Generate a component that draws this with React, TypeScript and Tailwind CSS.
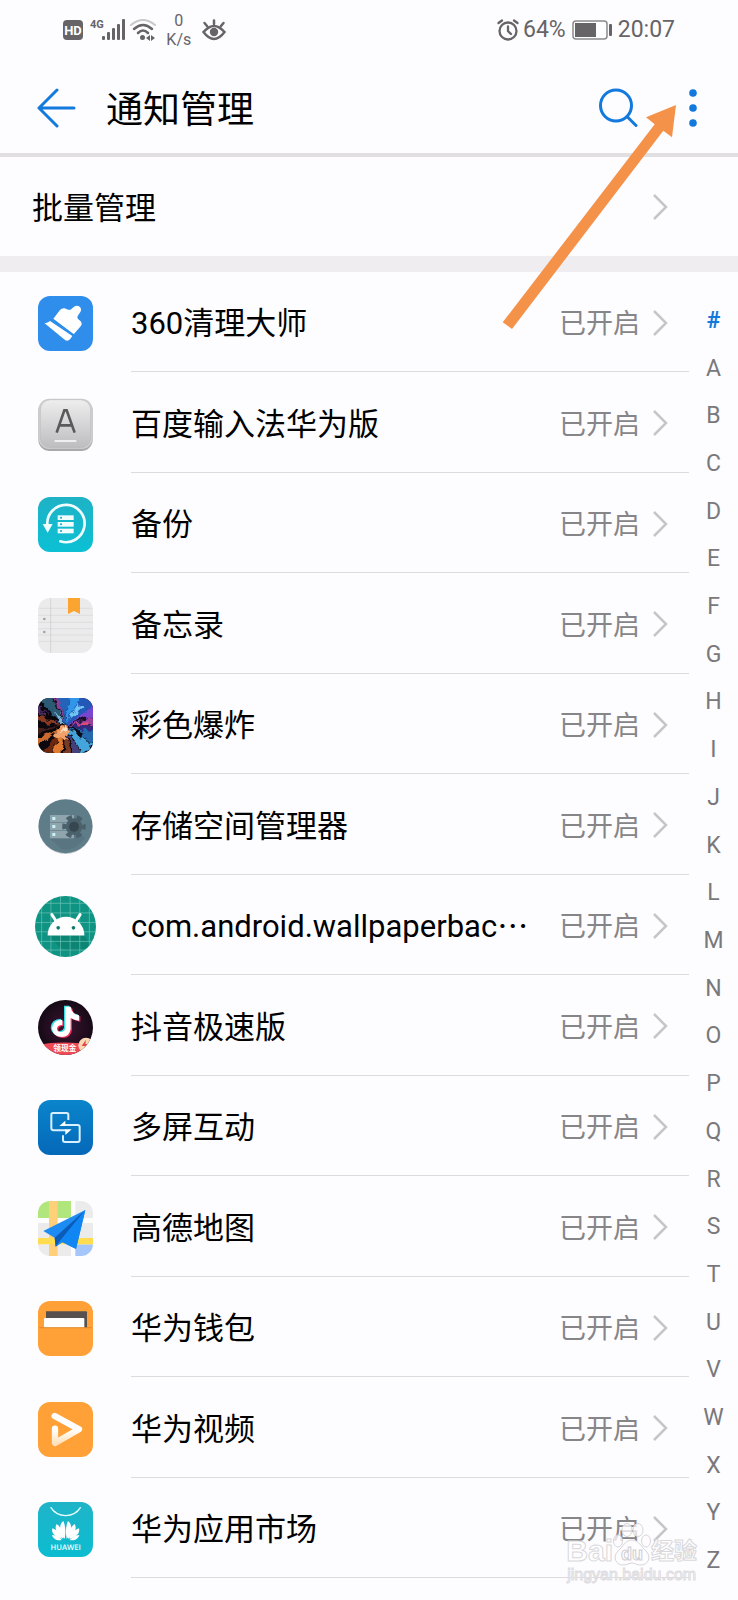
import type { ReactNode } from "react";

function CleanerIcon() {
  return (
    <svg viewBox="0 0 165 165" className="size-[55px]" aria-hidden="true">
      <rect width="165" height="165" rx="36" fill="#2f8eec" />
      <g fill="#fff">
        <path d="M20 82 Q30 81 36 75 L103 120 L96 130 Q90 137 82 133 Z" />
        <path d="M46 68 L66 42 Q72 35 80 37 L90 41 Q97 43 101 38 L110 31 Q118 27 126 33 Q132 40 127 48 L119 60 Q116 66 121 70 L128 76 Q134 83 128 91 L107 115 Z" />
      </g>
      <path d="M42 70 L107 117" stroke="#2f8eec" strokeWidth="4" />
    </svg>
  );
}

function InputMethodIcon() {
  return (
    <svg viewBox="0 0 165 165" className="size-[55px]" aria-hidden="true">
      <defs>
        <linearGradient id="key" x1="0" y1="0" x2="0" y2="1">
          <stop offset="0" stopColor="#eeeeef" />
          <stop offset="1" stopColor="#bdbdbf" />
        </linearGradient>
      </defs>
      <rect x="1" y="7" width="163" height="155" rx="34" fill="#a9a9ac" />
      <rect x="1" y="5" width="163" height="151" rx="34" fill="#cfcfd1" />
      <rect x="7" y="8" width="151" height="145" rx="30" fill="url(#key)" stroke="#bcbcbe" strokeWidth="2" />
      <path d="M56 107 L79 40 H86 L110 107 M64 85 H102" fill="none" stroke="#5a5a5d" strokeWidth="8" />
      <path d="M50 132 H115" stroke="#f8f8f9" strokeWidth="5" />
    </svg>
  );
}

function BackupIcon() {
  return (
    <svg viewBox="0 0 165 165" className="size-[55px]" aria-hidden="true">
      <defs>
        <linearGradient id="backup" x1="0" y1="0" x2="0" y2="1">
          <stop offset="0" stopColor="#1fb2c6" />
          <stop offset="1" stopColor="#0bc0d4" />
        </linearGradient>
      </defs>
      <rect width="165" height="165" rx="36" fill="url(#backup)" />
      <path d="M28 84 A56 56 0 1 1 67 133" fill="none" stroke="#f0fdff" strokeWidth="8" strokeLinecap="round" />
      <path d="M14 81 H44 L29 107 Z" fill="#f0fdff" />
      <g fill="#f0fdff">
        <rect x="59" y="55" width="48" height="14" />
        <rect x="59" y="75" width="48" height="14" />
        <rect x="59" y="95" width="48" height="14" />
      </g>
      <g fill="#14a3b8">
        <circle cx="69" cy="62" r="3" />
        <circle cx="69" cy="82" r="3" />
        <circle cx="69" cy="102" r="3" />
      </g>
    </svg>
  );
}

function NotesIcon() {
  return (
    <svg viewBox="0 0 165 165" className="size-[55px]" aria-hidden="true">
      <rect width="165" height="165" rx="36" fill="#ebebec" />
      <path d="M4 31 H162 M0 52 H165 M0 73 H165 M0 92 H165 M0 111 H165 M3 130 H162" stroke="#d8d8da" strokeWidth="2" />
      <path d="M38 1 V164" stroke="#c9c9cb" strokeWidth="2" />
      <circle cx="19" cy="63" r="4" fill="#a2a2a4" />
      <circle cx="19" cy="102" r="4" fill="#a2a2a4" />
      <path d="M90 0 H126 V48 L108 39 L90 48 Z" fill="#fba430" />
    </svg>
  );
}

function BurstIcon() {
  return (
    <svg viewBox="0 0 165 165" className="size-[55px]" aria-hidden="true">
      <defs>
        <clipPath id="burst-clip">
          <rect width="165" height="165" rx="34" />
        </clipPath>
        <filter id="ragged" x="-10%" y="-10%" width="120%" height="120%" colorInterpolationFilters="sRGB">
          <feTurbulence type="fractalNoise" baseFrequency="0.05" numOctaves="2" seed="7" result="noise" />
          <feDisplacementMap in="SourceGraphic" in2="noise" scale="26" xChannelSelector="R" yChannelSelector="G" />
          <feGaussianBlur stdDeviation="1.500" />
        </filter>
      </defs>
      <g clipPath="url(#burst-clip)">
        <rect width="165" height="165" fill="#0b0810" />
        <g filter="url(#ragged)">
          <path d="M80 84 L-10 -10 L40 -10 Z" fill="#2c5a74" />
          <path d="M80 80 L44 -10 L66 -10 Z" fill="#8a3f96" />
          <path d="M82 80 L62 -10 L96 -10 Z" fill="#2464b8" />
          <path d="M84 84 L92 -10 L176 -10 L172 30 Z" fill="#2358b8" />
          <path d="M84 74 L96 -6 L128 -6 Z" fill="#2f96e8" />
          <path d="M92 66 L118 18 L134 30 Z" fill="#6fc6f2" />
          <path d="M86 82 L172 18 L172 56 Z" fill="#7a46d0" />
          <path d="M88 84 L172 58 L172 82 Z" fill="#9a3f9c" />
          <path d="M104 82 L150 72 L152 80 Z" fill="#e04a78" />
          <path d="M88 86 L172 82 L172 102 Z" fill="#332a86" />
          <path d="M86 88 L172 100 L172 140 Z" fill="#2468ae" />
          <path d="M86 90 L166 138 L134 166 Z" fill="#44a4dc" />
          <path d="M84 92 L136 172 L108 172 Z" fill="#46407a" />
          <path d="M80 92 L102 172 L78 172 Z" fill="#7a3a26" />
          <path d="M78 92 L70 172 L40 172 Z" fill="#e07a30" />
          <path d="M76 90 L40 168 L10 164 Z" fill="#6e2810" />
          <path d="M76 88 L-6 146 L-6 120 Z" fill="#cc6a2e" />
          <path d="M74 84 L-6 106 L-6 88 Z" fill="#42201c" />
          <path d="M74 82 L-6 72 L-6 48 Z" fill="#8a3a20" />
          <path d="M74 80 L-6 40 L-6 16 Z" fill="#54306a" />
          <path d="M82 78 L96 96 L80 128 L46 116 L60 96 Z" fill="#f2a06a" />
          <path d="M78 82 L88 92 L66 108 Z" fill="#ffe0c4" />
          <path d="M50 36 L82 76 L68 80 Z" fill="#7cb8dc" />
          <path d="M98 88 L136 104 L126 122 Z" fill="#0c0a18" />
          <path d="M96 74 L150 52 L142 66 Z" fill="#140d24" />
          <path d="M66 66 L12 36 L30 68 Z" fill="#08060a" />
          <path d="M62 90 L8 110 L36 110 Z" fill="#08060a" />
        </g>
      </g>
    </svg>
  );
}

function StorageIcon() {
  return (
    <svg viewBox="0 0 165 165" className="size-[55px]" aria-hidden="true">
      <circle cx="82.5" cy="84" r="81" fill="#c2c8cb" />
      <circle cx="82.5" cy="81.500" r="81" fill="#5f7c89" />
      <path d="M36 118 L70 150 Q112 158 140 118 L108 84 Z" fill="#597581" />
      <g fill="#90a4ad">
        <rect x="36" y="48" width="72" height="22" />
        <rect x="36" y="72" width="72" height="22" />
        <rect x="36" y="96" width="72" height="22" />
      </g>
      <g fill="#c4f4f4">
        <rect x="43" y="54" width="9" height="9" />
        <rect x="43" y="78" width="9" height="9" />
        <rect x="43" y="102" width="9" height="9" />
      </g>
      <circle cx="108" cy="83" r="25" fill="#4a616c" />
      <circle cx="108" cy="83" r="29" fill="none" stroke="#4a616c" strokeWidth="13" strokeDasharray="16 14.370" strokeDashoffset="8" />
      <circle cx="108" cy="83" r="15" fill="#37474f" />
    </svg>
  );
}

function AndroidIcon() {
  return (
    <svg viewBox="0 0 184 184" className="size-[61px]" aria-hidden="true">
      <defs>
        <clipPath id="android-clip">
          <circle cx="92" cy="92" r="92" />
        </clipPath>
      </defs>
      <g clipPath="url(#android-clip)">
        <rect width="184" height="184" fill="#0f9483" />
        <path d="M38 118 L72 152 Q120 180 170 150 L148 118 Z" fill="#0c8575" />
        <path d="M20 0 V184 M48 0 V184 M77 0 V184 M106 0 V184 M135 0 V184 M164 0 V184 M0 22 H184 M0 51 H184 M0 80 H184 M0 108 H184 M0 137 H184 M0 163 H184" stroke="#6fc4b8" strokeWidth="2" />
      </g>
      <path d="M38 119 A55 56 0 0 1 149 119 Z" fill="#fff" />
      <path d="M51 56 L62 73 M136 56 L125 73" stroke="#fff" strokeWidth="9" strokeLinecap="round" />
      <circle cx="70" cy="96" r="5.500" fill="#0f7a6c" />
      <circle cx="116" cy="96" r="5.500" fill="#0f7a6c" />
    </svg>
  );
}

function NoteShape({ fill }: { fill: string }) {
  return (
    <path
      d="M82 20 H98 Q101 42 123 46 V62 Q109 61 98 54 V86 Q95 111 70 111 Q45 108 42 86 Q43 61 73 59 V75 Q57 76 57 86 Q58 96 70 96 Q81 95 82 84 Z"
      fill={fill}
    />
  );
}

function DouyinIcon() {
  return (
    <svg viewBox="0 0 165 165" className="size-[55px]" aria-hidden="true">
      <defs>
        <clipPath id="douyin-clip">
          <circle cx="82.5" cy="82.5" r="82.5" />
        </clipPath>
        <radialGradient id="douyin-bg">
          <stop offset="0" stopColor="#3c1432" />
          <stop offset="1" stopColor="#160a16" />
        </radialGradient>
      </defs>
      <g clipPath="url(#douyin-clip)">
        <rect width="165" height="165" fill="url(#douyin-bg)" />
        <g transform="translate(-4 -3)">
          <NoteShape fill="#35e0e6" />
        </g>
        <g transform="translate(4 3)">
          <NoteShape fill="#f0305c" />
        </g>
        <NoteShape fill="#fff" />
        <path d="M0 134 Q60 124 128 130 V165 H0 Z" fill="#ee4a58" />
        <circle cx="144" cy="136" r="23" fill="#fbd9b4" />
        <path d="M144 119 L131 138 H141 L137 152 L151 132 H142 Z" fill="#e8404a" />
        <text x="46" y="153" fontSize="23" fontWeight="700" fill="#fff" className="font-['Noto_Sans_CJK_SC',sans-serif]">
          领现金
        </text>
      </g>
    </svg>
  );
}

function ScreenShareIcon() {
  return (
    <svg viewBox="0 0 165 165" className="size-[55px]" aria-hidden="true">
      <defs>
        <linearGradient id="share" x1="0" y1="0" x2="0" y2="1">
          <stop offset="0" stopColor="#0a85cc" />
          <stop offset="1" stopColor="#0568b8" />
        </linearGradient>
      </defs>
      <rect width="165" height="165" rx="36" fill="url(#share)" />
      <g fill="none" stroke="#d8f0ff" strokeWidth="6" strokeLinejoin="round">
        <path d="M91 60 V44 Q91 39 86 39 H45 Q40 39 40 44 V84 Q40 91 47 91 H84" />
        <path d="M80 75 H119 Q125 75 125 81 V120 Q125 126 119 126 H81 Q75 126 75 120 V106" />
      </g>
      <path d="M64 78 L82 62 V78 Z M101 88 L82 105 V88 Z" fill="#fff" />
    </svg>
  );
}

function MapIcon() {
  return (
    <svg viewBox="0 0 165 165" className="size-[55px]" aria-hidden="true">
      <defs>
        <clipPath id="map-clip">
          <rect width="165" height="165" rx="36" />
        </clipPath>
      </defs>
      <g clipPath="url(#map-clip)">
        <rect width="165" height="165" fill="#fdfdfd" />
        <rect width="99" height="51" fill="#b0e67c" />
        <rect x="112" width="53" height="51" fill="#ebebec" />
        <rect y="66" width="165" height="46" fill="#ebebec" />
        <rect y="130" width="99" height="35" fill="#ebebec" />
        <rect x="112" y="130" width="53" height="35" fill="#a4c6fa" />
        <rect x="33" width="26" height="165" fill="#ffcf7a" />
        <rect y="111" width="165" height="19" fill="#ffdc50" />
      </g>
      <path d="M16 90 L142 27 L114 144 L74 124 L53 137 L50 110 Z" fill="#1c8cf4" />
      <path d="M50 110 L142 27 L66 120 L53 137 Z" fill="#0a5cb8" />
      <path d="M66 120 L142 27 L114 144 Z" fill="#0f86f4" />
    </svg>
  );
}

function WalletIcon() {
  return (
    <svg viewBox="0 0 165 165" className="size-[55px]" aria-hidden="true">
      <rect width="165" height="165" rx="36" fill="#ffa136" />
      <path d="M24 31 H144 Q147 31 147 34 V81 H24 Z" fill="#56504f" />
      <path d="M18 54 Q18 51 21 51 H136 Q139 51 139 54 V81 H18 Z" fill="#fff" />
      <path d="M4 80 H161" stroke="#e2892a" strokeWidth="3" />
    </svg>
  );
}

function VideoIcon() {
  return (
    <svg viewBox="0 0 165 165" className="size-[55px]" aria-hidden="true">
      <defs>
        <linearGradient id="play" x1="0" y1="0" x2="0" y2="1">
          <stop offset="0.5" stopColor="#fff" />
          <stop offset="1" stopColor="#ffe2bd" />
        </linearGradient>
      </defs>
      <rect width="165" height="165" rx="36" fill="#ffa136" />
      <path d="M50 42 L123 82 L51 123 V80" fill="none" stroke="url(#play)" strokeWidth="19" strokeLinejoin="round" strokeLinecap="round" />
    </svg>
  );
}

function MarketIcon() {
  return (
    <svg viewBox="0 0 165 165" className="size-[55px]" aria-hidden="true">
      <defs>
        <linearGradient id="market" x1="0" y1="0" x2="0" y2="1">
          <stop offset="0" stopColor="#1fb4c8" />
          <stop offset="1" stopColor="#0cbcd0" />
        </linearGradient>
      </defs>
      <rect width="165" height="165" rx="36" fill="url(#market)" />
      <path d="M39 17 Q53 40 83 41 Q113 40 127 17" fill="none" stroke="#e8fbff" strokeWidth="4" strokeLinecap="round" />
      <g fill="#fff">
        <path d="M80 110 C64 96 61 67 76 57 C84 74 83 96 80 110 Z" />
        <path d="M86 110 C102 96 105 67 90 57 C82 74 83 96 86 110 Z" />
        <path d="M76 110 C56 98 48 79 56 66 C70 76 76 94 76 110 Z" />
        <path d="M90 110 C110 98 118 79 110 66 C96 76 90 94 90 110 Z" />
        <path d="M72 111 C52 106 39 94 43 79 C58 84 68 98 72 111 Z" />
        <path d="M94 111 C114 106 127 94 123 79 C108 84 98 98 94 111 Z" />
        <path d="M71 114 C58 118 44 110 42 99 C54 100 64 106 71 114 Z" />
        <path d="M95 114 C108 118 122 110 124 99 C112 100 102 106 95 114 Z" />
      </g>
      <text x="83" y="143" textAnchor="middle" fontSize="23" fontWeight="600" fill="#f0fdff" textRendering="geometricPrecision" className="font-['Open_Sans',sans-serif]">
        HUAWEI
      </text>
    </svg>
  );
}

function Chevron() {
  return (
    <svg viewBox="0 0 16 28" className="h-[28px] w-[16px] shrink-0" aria-hidden="true">
      <path d="M2 2 L14 14 L2 26" fill="none" stroke="#c6c5c8" strokeWidth="2.500" />
    </svg>
  );
}

type AppEntry = { name: string; icon: ReactNode };

const apps: AppEntry[] = [
  { name: "360清理大师", icon: <CleanerIcon /> },
  { name: "百度输入法华为版", icon: <InputMethodIcon /> },
  { name: "备份", icon: <BackupIcon /> },
  { name: "备忘录", icon: <NotesIcon /> },
  { name: "彩色爆炸", icon: <BurstIcon /> },
  { name: "存储空间管理器", icon: <StorageIcon /> },
  { name: "com.android.wallpaperbac⋯", icon: <AndroidIcon /> },
  { name: "抖音极速版", icon: <DouyinIcon /> },
  { name: "多屏互动", icon: <ScreenShareIcon /> },
  { name: "高德地图", icon: <MapIcon /> },
  { name: "华为钱包", icon: <WalletIcon /> },
  { name: "华为视频", icon: <VideoIcon /> },
  { name: "华为应用市场", icon: <MarketIcon /> },
];

const letters = "ABCDEFGHIJKLMNOPQRSTUVWXYZ".split("");

function StatusBar() {
  return (
    <div className="flex h-[58px] items-center justify-between px-[63px] pt-[2px] text-[#666467]">
      <div className="flex items-center">
        <div className="flex size-[20px] items-center justify-center rounded-[4px] bg-[#666467] text-[13px] leading-none font-bold text-white">
          HD
        </div>
        <div className="ml-[7px] flex h-[22px] items-start">
          <span className="text-[11px] leading-[12px] font-bold">4G</span>
          <svg viewBox="0 0 24 22" className="-ml-[2px] h-[22px] w-[24px]" fill="currentColor" aria-hidden="true">
            <rect x="0" y="17" width="3" height="4" rx="1" />
            <rect x="5" y="13" width="3" height="8" rx="1" />
            <rect x="10" y="9" width="3" height="12" rx="1" />
            <rect x="15" y="5" width="3" height="16" rx="1" />
            <rect x="20" y="0" width="3" height="21" rx="1" />
          </svg>
        </div>
        <svg viewBox="0 0 26 22" className="ml-[4px] h-[22px] w-[26px]" aria-hidden="true">
          <g fill="none" stroke="currentColor" strokeWidth="2.500" strokeLinecap="round">
            <path d="M1 6 Q13 -4 25 6" stroke="#c9c8ca" strokeWidth="2" />
            <path d="M4 10 Q13 2 22 10" />
            <path d="M8 14 Q13 9 18 14" />
          </g>
          <circle cx="12.5" cy="18.500" r="2.500" fill="currentColor" />
          <path d="M16 19 L20 16 V22 Z M25 19 L21 16 V22 Z" fill="currentColor" />
        </svg>
        <div className="ml-[10px] flex w-[26px] flex-col items-center text-[16px] leading-[19px]">
          <span>0</span>
          <span>K/s</span>
        </div>
        <svg viewBox="0 0 24 22" className="ml-[10px] h-[22px] w-[24px]" fill="none" stroke="currentColor" strokeWidth="2.500" strokeLinecap="round" aria-hidden="true">
          <path d="M1.500 13 Q12 1 22.500 13 Q12 27 1.500 13 Z" />
          <circle cx="12" cy="13" r="4.200" fill="currentColor" stroke="none" />
          <path d="M12 5 V1.500 M5 7 L2.500 4 M19 7 L21.500 4" />
        </svg>
      </div>
      <div className="flex items-center text-[23px] leading-[28px]">
        <svg viewBox="0 0 22 22" className="mr-[4px] size-[22px]" fill="none" stroke="currentColor" strokeWidth="2.300" strokeLinecap="round" aria-hidden="true">
          <circle cx="11" cy="12" r="8.500" />
          <path d="M11 7.500 V12 L14 15 M1.500 4 L5 1.500 M20.500 4 L17 1.500" />
        </svg>
        <span>64%</span>
        <svg viewBox="0 0 40 20" className="mx-[6px] h-[20px] w-[40px]" aria-hidden="true">
          <rect x="1" y="1" width="34" height="18" rx="3" fill="none" stroke="#8b898c" strokeWidth="1.500" />
          <rect x="3" y="3" width="21" height="14" fill="currentColor" />
          <rect x="37" y="4" width="3" height="12" rx="1" fill="currentColor" />
        </svg>
        <span>20:07</span>
      </div>
    </div>
  );
}

function Header() {
  return (
    <header className="flex h-[99px] items-center border-b-4 border-[#e1dfe2] pt-[4px] pr-[41px] pl-[37px] text-[#1479dc]">
      <button type="button" aria-label="返回" className="shrink-0">
        <svg viewBox="0 0 39 40" className="h-[40px] w-[39px]" fill="none" stroke="currentColor" strokeWidth="3" strokeLinecap="round" strokeLinejoin="round" aria-hidden="true">
          <path d="M20 2 L2 20 L20 38 M2 20 H37" />
        </svg>
      </button>
      <h1 className="ml-[30px] flex-1 pt-[6px] text-[37px] leading-[44px] font-normal text-black">通知管理</h1>
      <button type="button" aria-label="搜索" className="shrink-0">
        <svg viewBox="0 0 40 40" className="size-[40px]" fill="none" stroke="currentColor" strokeWidth="3" strokeLinecap="round" aria-hidden="true">
          <circle cx="18" cy="17.500" r="15.500" />
          <path d="M29 28.500 L38 37.500" />
        </svg>
      </button>
      <button type="button" aria-label="更多" className="ml-[51px] shrink-0">
        <svg viewBox="0 0 8 40" className="h-[40px] w-[8px]" fill="currentColor" aria-hidden="true">
          <circle cx="4" cy="5" r="3.800" />
          <circle cx="4" cy="20" r="3.800" />
          <circle cx="4" cy="35" r="3.800" />
        </svg>
      </button>
    </header>
  );
}

function Watermark() {
  return (
    <div className="pointer-events-none absolute right-[41px] bottom-[16px] flex flex-col items-center font-['Liberation_Sans','Noto_Sans_CJK_SC',sans-serif] text-white/80 select-none">
      <div className="flex items-end">
        <span className="text-[30px] leading-[30px] font-bold [-webkit-text-stroke:1px_#d9d8db]">Bai</span>
        <span className="relative flex h-[44px] w-[38px] items-end justify-center">
          <svg viewBox="0 0 38 44" className="absolute inset-0 h-[44px] w-[38px]" aria-hidden="true">
            <g fill="#fdfcff" fillOpacity="0.75" stroke="#d6d5d8" strokeWidth="1">
              <ellipse cx="5" cy="19" rx="4.500" ry="6" />
              <ellipse cx="14" cy="8" rx="5" ry="6.500" />
              <ellipse cx="25" cy="8" rx="5" ry="6.500" />
              <ellipse cx="33" cy="19" rx="4.500" ry="6" />
              <path d="M19 18 C26 18 28 25 33 29 C39 35 35 43 28 43 C23 43 22 41 19 41 C16 41 15 43 10 43 C3 43 -1 35 5 29 C10 25 12 18 19 18 Z" />
            </g>
          </svg>
          <span className="relative text-[18px] leading-[24px] font-bold [-webkit-text-stroke:1px_#d0cfd2]">du</span>
        </span>
        <span className="text-[23px] leading-[30px] font-bold [-webkit-text-stroke:1px_#d9d8db]">经验</span>
      </div>
      <span className="text-[16px] leading-[18px] [-webkit-text-stroke:1px_#dddcdf]">jingyan.baidu.com</span>
    </div>
  );
}

export default function App() {
  return (
    <div className="relative w-full overflow-hidden bg-[#fdfcff] font-['Roboto','Noto_Sans_CJK_SC',sans-serif] text-black" lang="zh-CN">
      <StatusBar />
      <Header />
      <button type="button" className="flex h-[99px] w-full items-center justify-between pr-[70px] pl-[32px] text-left">
        <span className="pt-[4px] text-[31px] leading-[40px]">批量管理</span>
        <Chevron />
      </button>
      <main className="flex border-t-16 border-[#efedf0]">
        <ul className="min-w-0 flex-1 pb-[22px]">
          {apps.map((app) => (
            <li key={app.name} className="odd:h-[100px] even:h-[101px]">
              <button type="button" className="flex size-full text-left">
                <span className="flex w-[131px] shrink-0 items-center justify-center pt-[3px]">{app.icon}</span>
                <span className="flex min-w-0 flex-1 items-center border-b border-[#dddbde] pt-[2px] pr-[21px]">
                  <span className="flex-1 pt-[3px] text-[31px] leading-[40px] whitespace-nowrap">{app.name}</span>
                  <span className="mr-[12px] shrink-0 pt-[3px] text-[27px] leading-[40px] text-[#868588]">已开启</span>
                  <Chevron />
                </span>
              </button>
            </li>
          ))}
        </ul>
        <nav aria-label="索引" className="flex w-[49px] shrink-0 flex-col pt-[25px] pb-[15px] text-[23px] text-[#79787b]">
          <a href="#top" className="flex flex-1 items-center justify-center font-bold text-[#1479dc]">
            #
          </a>
          {letters.map((letter) => (
            <a key={letter} href={`#${letter}`} className="flex flex-1 items-center justify-center leading-[28px]">
              {letter}
            </a>
          ))}
        </nav>
      </main>
      <svg viewBox="0 0 176 228" className="pointer-events-none absolute top-[103px] right-[60px] h-[228px] w-[176px]" aria-hidden="true">
        <path d="M174 2 L144 14.300 L152.700 21.300 L0.700 219.300 L10 226 L161.300 27.700 L170 34.300 Z" fill="#f5924a" />
      </svg>
      <Watermark />
    </div>
  );
}
